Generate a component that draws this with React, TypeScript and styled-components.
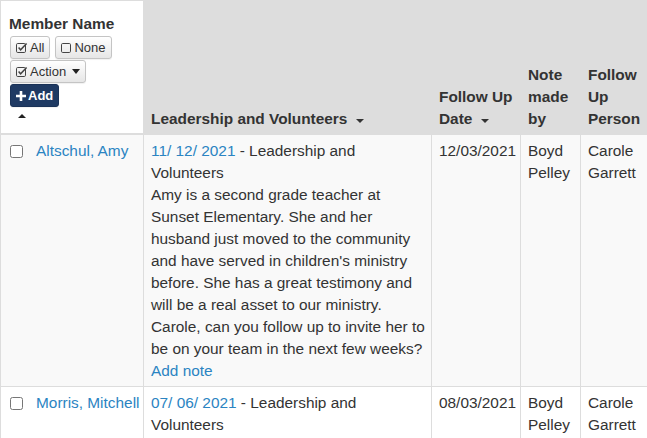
import styled, { createGlobalStyle } from "styled-components";

const GlobalStyle = createGlobalStyle`
  html, body {
    margin: 0;
    padding: 0;
    background: #fff;
    overflow: hidden;
  }
  body {
    font-family: "Liberation Sans", Arial, sans-serif;
    font-size: 15.4px;
    color: #333;
  }
`;

const Table = styled.table`
  border-collapse: collapse;
  table-layout: fixed;
  width: 652px;
`;

const HeadCell = styled.th<{ $plain?: boolean }>`
  background: ${(p) => (p.$plain ? "#fff" : "#dddddd")};
  border: 1px solid #ddd;
  border-bottom: 2px solid #ddd;
  vertical-align: bottom;
  text-align: left;
  font-weight: bold;
  line-height: 22px;
  padding: 4px 6px 3px 7px;
  height: 133px;
  box-sizing: border-box;
`;

const MemberHead = styled(HeadCell)`
  padding: 12px 6px 6px 8px;
  vertical-align: top;
`;

const Row = styled.tr<{ $striped?: boolean }>`
  background: ${(p) => (p.$striped ? "#f9f9f9" : "#fff")};
`;

const Cell = styled.td`
  border: 1px solid #ddd;
  vertical-align: top;
  line-height: 22px;
  padding: 5px 5px 4px 7px;
`;

const NameCell = styled(Cell)`
  padding-left: 8px;
  white-space: nowrap;
`;

const Check = styled.input.attrs({ type: "checkbox" })`
  width: 13px;
  height: 13px;
  margin: 0 13px 0 1px;
  vertical-align: -2px;
`;

const Link = styled.a`
  color: #2b84c2;
  text-decoration: none;
  cursor: pointer;
`;

const BtnRow = styled.div`
  display: flex;
  gap: 5px;
  margin-top: 1px;
  margin-left: 1px;
`;

const Btn = styled.button<{ $dark?: boolean }>`
  display: inline-flex;
  align-items: center;
  gap: 2px;
  height: 23px;
  padding: 0 5px;
  font-family: "Liberation Sans", Arial, sans-serif;
  font-size: 13px;
  font-weight: ${(p) => (p.$dark ? "bold" : "normal")};
  color: ${(p) => (p.$dark ? "#fff" : "#333")};
  background: ${(p) =>
    p.$dark ? "#1f3a63" : "linear-gradient(#ffffff, #e6e6e6)"};
  border: 1px solid ${(p) => (p.$dark ? "#1a3257" : "#c4c4c4")};
  border-radius: 3px;
  box-shadow: 0 1px 1px rgba(0, 0, 0, 0.06);
`;

const Caret = styled.span`
  display: inline-block;
  width: 0;
  height: 0;
  border-left: 4.5px solid transparent;
  border-right: 4.5px solid transparent;
  border-top: 5px solid #222;
  margin-left: 4px;
`;

const UpCaret = styled.div`
  margin: 7px 0 0 9px;
  width: 0;
  height: 0;
  border-left: 4px solid transparent;
  border-right: 4px solid transparent;
  border-bottom: 4px solid #222;
`;

const SortCaret = styled.span`
  display: inline-block;
  width: 0;
  height: 0;
  border-left: 4px solid transparent;
  border-right: 4px solid transparent;
  border-top: 4px solid #333;
  vertical-align: middle;
  margin-left: 9px;
  margin-top: 3px;
`;

function CheckSquare() {
  return (
    <svg width="12" height="11" viewBox="0 0 12 11">
      <rect x="0.5" y="1.5" width="9" height="9" rx="1.2" fill="none" stroke="#444" />
      <path d="M2.6 5.6 L4.6 7.8 L10.6 1.5" fill="none" stroke="#444" strokeWidth="1.5" />
    </svg>
  );
}

function EmptySquare() {
  return (
    <svg width="11" height="11" viewBox="0 0 11 11">
      <rect x="0.5" y="1.5" width="9" height="9" rx="1.2" fill="none" stroke="#444" />
    </svg>
  );
}

function Plus() {
  return (
    <svg width="10" height="10" viewBox="0 0 10 10">
      <path d="M5 0 V10 M0 5 H10" stroke="#fff" strokeWidth="2.6" />
    </svg>
  );
}

export default function App() {
  return (
    <>
      <GlobalStyle />
      <Table>
        <colgroup>
          <col style={{ width: 143 }} />
          <col style={{ width: 288 }} />
          <col style={{ width: 89 }} />
          <col style={{ width: 60 }} />
          <col style={{ width: 72 }} />
        </colgroup>
        <thead>
          <tr>
            <MemberHead $plain>
              Member Name
              <BtnRow>
                <Btn>
                  <CheckSquare />
                  All
                </Btn>
                <Btn>
                  <EmptySquare />
                  None
                </Btn>
              </BtnRow>
              <BtnRow>
                <Btn>
                  <CheckSquare />
                  Action
                  <Caret />
                </Btn>
              </BtnRow>
              <BtnRow>
                <Btn $dark>
                  <Plus />
                  Add
                </Btn>
              </BtnRow>
              <UpCaret />
            </MemberHead>
            <HeadCell>
              Leadership and Volunteers
              <SortCaret />
            </HeadCell>
            <HeadCell>
              Follow Up Date
              <SortCaret />
            </HeadCell>
            <HeadCell>Note made by</HeadCell>
            <HeadCell>Follow Up Person</HeadCell>
          </tr>
        </thead>
        <tbody>
          <Row $striped>
            <NameCell>
              <Check />
              <Link>Altschul, Amy</Link>
            </NameCell>
            <Cell>
              <Link>11/ 12/ 2021</Link> - Leadership and Volunteers
              <br />
              Amy is a second grade teacher at Sunset Elementary. She and her
              husband just moved to the community and have served in children's
              ministry before. She has a great testimony and will be a real
              asset to our ministry. Carole, can you follow up to invite her to
              be on your team in the next few weeks?
              <br />
              <Link>Add note</Link>
            </Cell>
            <Cell>12/03/2021</Cell>
            <Cell>Boyd Pelley</Cell>
            <Cell>Carole Garrett</Cell>
          </Row>
          <Row>
            <NameCell>
              <Check />
              <Link>Morris, Mitchell</Link>
            </NameCell>
            <Cell>
              <Link>07/ 06/ 2021</Link> - Leadership and Volunteers
            </Cell>
            <Cell>08/03/2021</Cell>
            <Cell>Boyd Pelley</Cell>
            <Cell>Carole Garrett</Cell>
          </Row>
        </tbody>
      </Table>
    </>
  );
}
